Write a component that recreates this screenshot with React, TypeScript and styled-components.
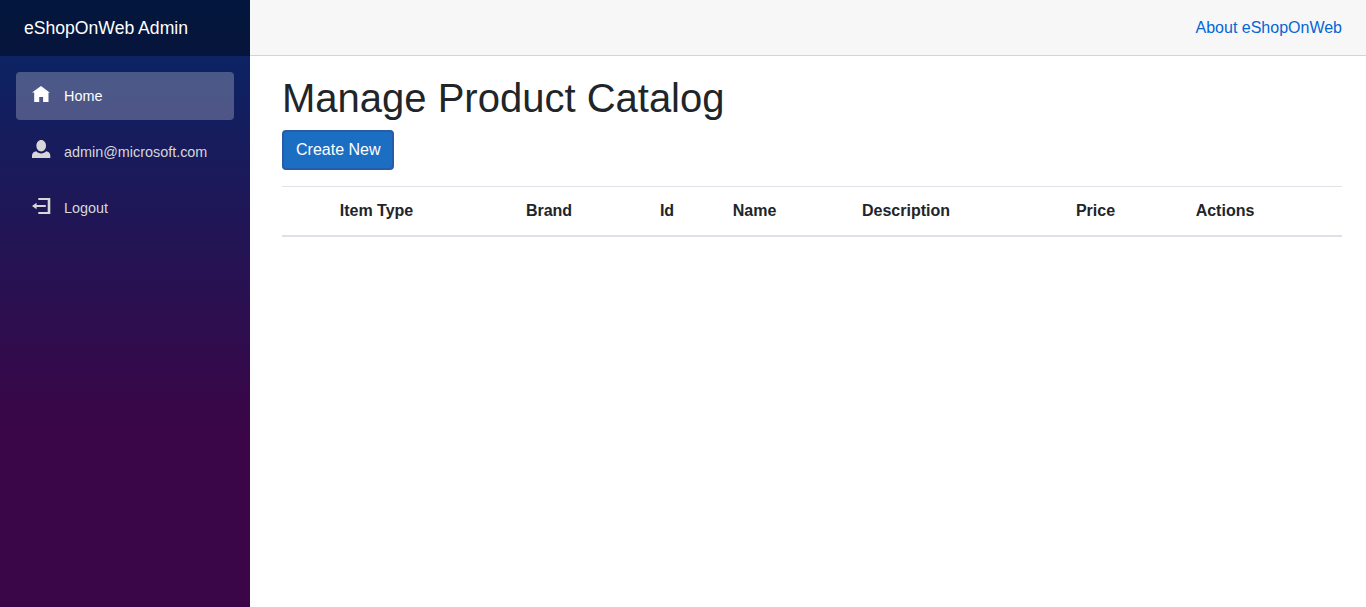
import React from "react";
import styled, { createGlobalStyle } from "styled-components";

const GlobalStyle = createGlobalStyle`
  *, *::before, *::after { box-sizing: border-box; }
  body {
    margin: 0;
    font-family: "Liberation Sans", Arial, sans-serif;
    font-size: 16px;
    line-height: 1.5;
    color: #212529;
    background: #fff;
  }
`;

const Page = styled.div`
  display: flex;
  height: 100vh;
`;

const Sidebar = styled.aside`
  width: 250px;
  flex: none;
  background-image: linear-gradient(180deg, rgb(5, 39, 103) 0%, #3a0647 70%);
`;

const Brand = styled.div`
  display: flex;
  align-items: center;
  height: 56px;
  padding: 0 24px;
  background: rgba(0, 0, 0, 0.4);
  color: #fff;
  font-size: 17.6px;
`;

const Nav = styled.nav`
  display: flex;
  flex-direction: column;
  gap: 8px;
  padding: 16px;
`;

const NavItem = styled.a<{ $active?: boolean }>`
  display: flex;
  align-items: center;
  height: 48px;
  border-radius: 4px;
  padding-left: 16px;
  font-size: 14.4px;
  line-height: 48px;
  text-decoration: none;
  color: ${(p) => (p.$active ? "#fff" : "#d7d7d7")};
  background: ${(p) => (p.$active ? "rgba(255, 255, 255, 0.25)" : "transparent")};
`;

const NavIcon = styled.svg`
  width: 18px;
  height: 18px;
  margin: 0 14px 6px 0;
  fill: currentColor;
`;

const Main = styled.main`
  flex: 1;
`;

const TopBar = styled.header`
  display: flex;
  align-items: center;
  justify-content: flex-end;
  height: 56px;
  padding-right: 24px;
  background: #f7f7f7;
  border-bottom: 1px solid #d6d5d5;
`;

const AboutLink = styled.a`
  color: #0366d6;
  text-decoration: none;
`;

const Content = styled.section`
  padding: 18px 24px 0 32px;
`;

const Title = styled.h1`
  margin: 0 0 8px;
  font-size: 40px;
  font-weight: 400;
  line-height: 48px;
`;

const PrimaryButton = styled.button`
  display: block;
  height: 40px;
  padding: 0 12px;
  border: 2px solid #275ca8;
  border-radius: 4px;
  background: #1b6ec2;
  color: #fff;
  font: inherit;
`;

const Table = styled.table`
  width: 100%;
  margin-top: 16px;
  border-collapse: collapse;
  table-layout: fixed;
`;

const HeadCell = styled.th<{ $width: number }>`
  width: ${(p) => p.$width}px;
  padding: 12px 0;
  border-top: 1px solid #dee2e6;
  border-bottom: 2px solid #dee2e6;
  text-align: center;
`;

const columns = [
  { label: "Item Type", width: 189 },
  { label: "Brand", width: 156 },
  { label: "Id", width: 80 },
  { label: "Name", width: 95 },
  { label: "Description", width: 208 },
  { label: "Price", width: 171 },
  { label: "Actions", width: 88 },
  { label: "", width: 73 },
];

const links = [
  {
    label: "Home",
    path: "M9 2 0 8.5h2.2V18h5v-5h3.9v5h5.4V8.6L18 8.7z",
    active: true,
  },
  {
    label: "admin@microsoft.com",
    path: "M9.2 0C6.5 0 4.4 2.5 4.4 5.8s2.1 5.7 4.8 5.7 4.8-2.4 4.8-5.7S11.9 0 9.2 0zM4.3 11.2C1.9 11.4 0 13.2 0 15.6V18h18.3v-2.4c0-2.4-1.8-4.2-4.2-4.4-1.2 1.4-2.9 2.2-4.9 2.2s-3.7-.8-4.9-2.2z",
  },
  {
    label: "Logout",
    path: "M6.3 2v2h9.4v12H6.3v2h12V2zM4.6 6.8 0 10l4.6 3.2V11h9.2V9H4.6z",
  },
];

export default function App() {
  return (
    <>
      <GlobalStyle />
      <Page>
        <Sidebar>
          <Brand>eShopOnWeb Admin</Brand>
          <Nav>
            {links.map((l) => (
              <NavItem key={l.label} $active={l.active}>
                <NavIcon viewBox="0 0 18 18" overflow="visible">
                  <path d={l.path} />
                </NavIcon>
                {l.label}
              </NavItem>
            ))}
          </Nav>
        </Sidebar>
        <Main>
          <TopBar>
            <AboutLink>About eShopOnWeb</AboutLink>
          </TopBar>
          <Content>
            <Title>Manage Product Catalog</Title>
            <PrimaryButton>Create New</PrimaryButton>
            <Table>
              <thead>
                <tr>
                  {columns.map((c) => (
                    <HeadCell key={c.label} $width={c.width}>
                      {c.label}
                    </HeadCell>
                  ))}
                </tr>
              </thead>
            </Table>
          </Content>
        </Main>
      </Page>
    </>
  );
}
